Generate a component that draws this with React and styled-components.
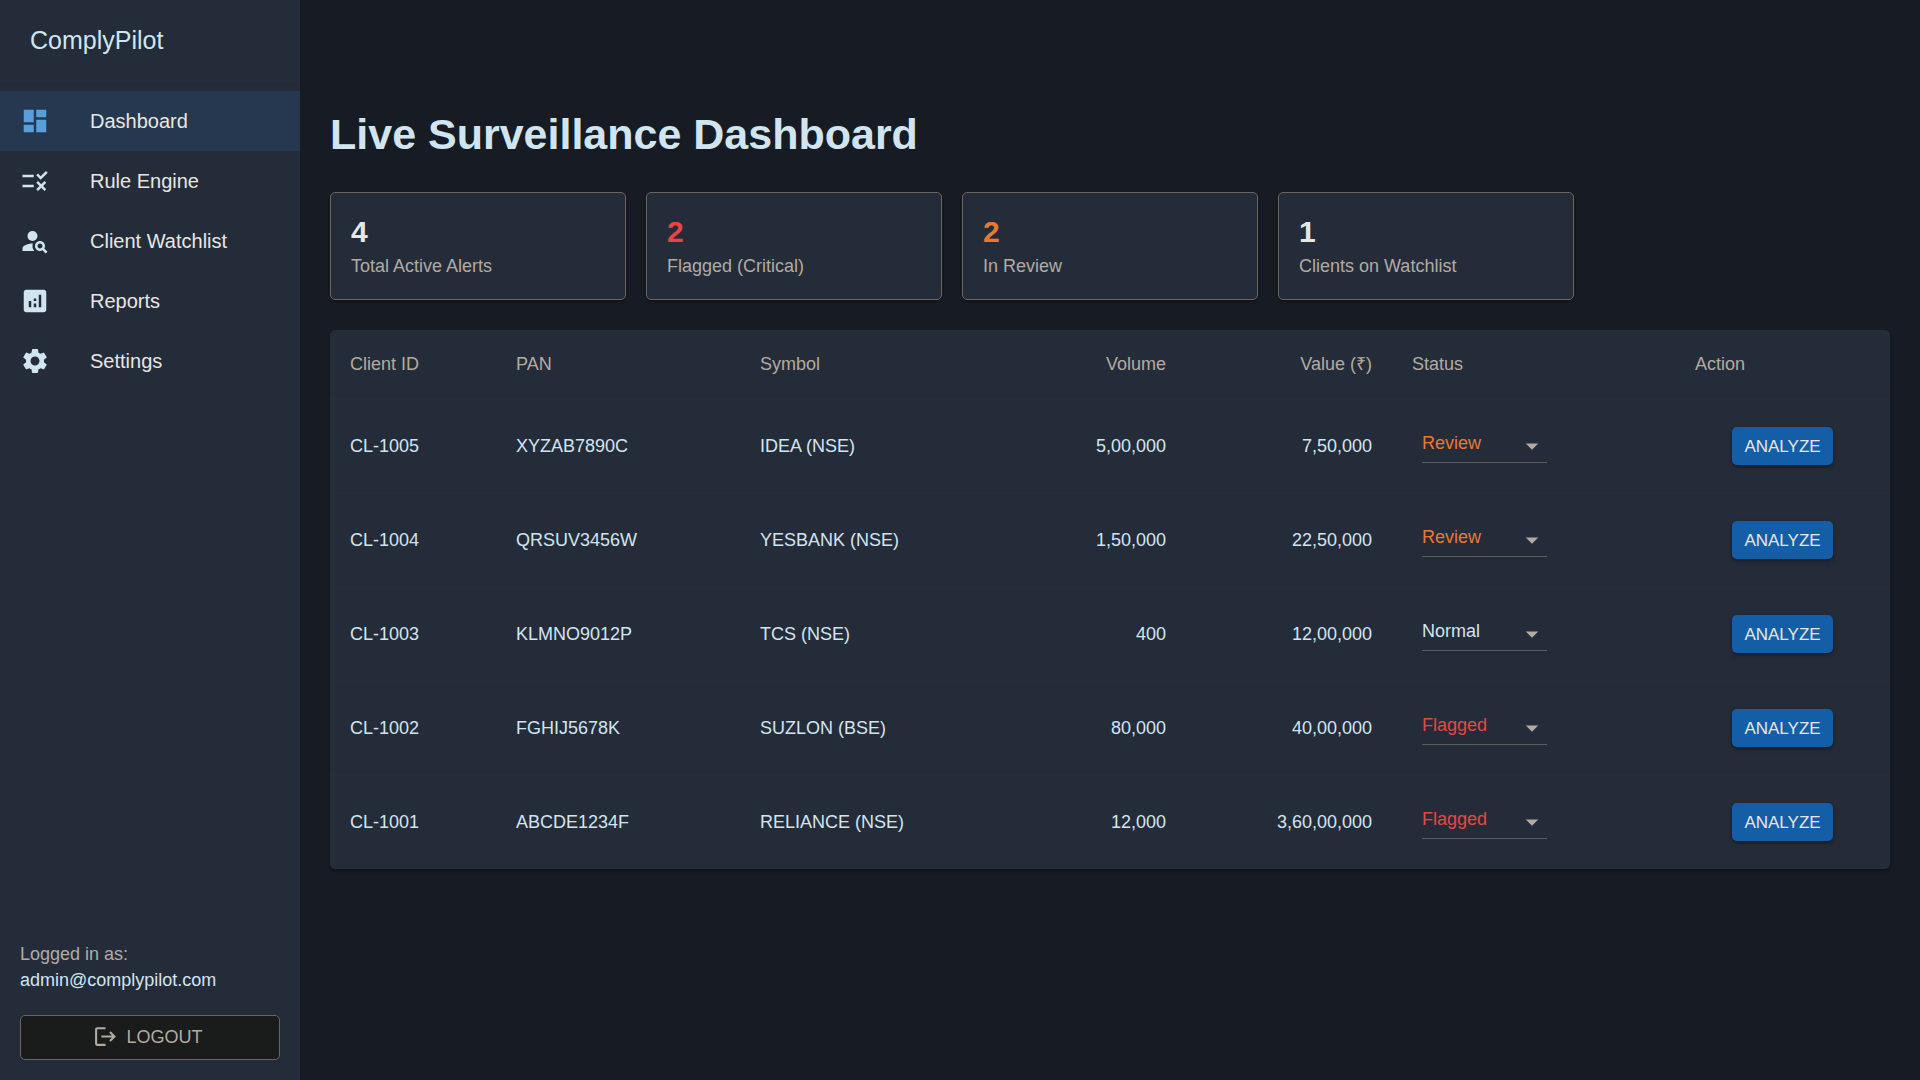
import React, { useState } from "react";
import styled, { createGlobalStyle } from "styled-components";
import {
  MdDashboard,
  MdRule,
  MdPersonSearch,
  MdAnalytics,
  MdSettings,
} from "react-icons/md";

const colors = {
  page: "#171b23",
  panel: "#252c39",
  selected: "#263850",
  line: "#272d39",
  border: "#6b655b",
  underline: "#5b5d5c",
  text: "#d1e5f1",
  bright: "#e8e6e3",
  muted: "#b2aba1",
  accent: "#589fdb",
  red: "#e64646",
  orange: "#e67a35",
  blue: "#145ea8",
  dark: "#1a1b1b",
};

const GlobalStyle = createGlobalStyle`
  *, *::before, *::after { box-sizing: border-box; }
  body {
    margin: 0;
    background: ${colors.page};
    color: ${colors.text};
    font-family: "Liberation Sans", Arial, sans-serif;
    font-size: 18px;
    line-height: 26px;
  }
`;

const Layout = styled.div`
  display: flex;
  min-height: 100vh;
`;

const Sidebar = styled.aside`
  display: flex;
  flex-direction: column;
  flex: none;
  width: 300px;
  background: ${colors.panel};
`;

const Brand = styled.div`
  display: flex;
  align-items: center;
  height: 81px;
  padding: 0 30px;
  border-bottom: 1px solid ${colors.line};
  font-size: 25px;
`;

const Nav = styled.nav`
  flex: 1;
  padding: 10px 0;
`;

const NavLink = styled.a`
  display: flex;
  align-items: center;
  gap: 40px;
  height: 60px;
  padding: 0 20px;
  background: ${(p) => (p.$active ? colors.selected : "transparent")};
  color: ${colors.bright};
  font-size: 20px;
  text-decoration: none;

  svg {
    width: 30px;
    height: 30px;
    color: ${(p) => (p.$active ? colors.accent : colors.text)};
  }
`;

const Account = styled.div`
  padding: 20px;
`;

const Muted = styled.div`
  color: ${colors.muted};
`;

const LogoutButton = styled.button`
  display: flex;
  align-items: center;
  justify-content: center;
  gap: 8px;
  width: 100%;
  height: 45px;
  margin-top: 22px;
  padding: 0 4px 2px 0;
  border: 1px solid ${colors.border};
  border-radius: 5px;
  background: ${colors.dark};
  color: ${colors.muted};
  font: inherit;
  cursor: pointer;

  svg {
    width: 25px;
    height: 25px;
  }
`;

const Main = styled.main`
  flex: 1;
  min-width: 0;
  padding: 108px 30px 30px;
`;

const Title = styled.h1`
  margin: 0 0 32px;
  font-size: 43px;
  line-height: 52px;
`;

const Stats = styled.section`
  display: grid;
  grid-template-columns: repeat(5, 1fr);
  gap: 20px;
  margin-bottom: 30px;
`;

const Card = styled.div`
  padding: 20px;
  border: 1px solid ${colors.border};
  border-radius: 5px;
  background: ${colors.panel};
  box-shadow: 0 2px 3px rgba(0, 0, 0, 0.3);
`;

const Figure = styled.div`
  padding-bottom: 2px;
  color: ${(p) => p.$color};
  font-size: 30px;
  font-weight: 700;
  line-height: 38px;
`;

const Panel = styled.section`
  overflow: hidden;
  border-radius: 5px;
  background: ${colors.panel};
  box-shadow: 0 2px 3px rgba(0, 0, 0, 0.3);
`;

const Table = styled.table`
  width: 100%;
  table-layout: fixed;
  border-collapse: collapse;
`;

const Col = styled.col`
  width: ${(p) => p.$w}px;
`;

const Head = styled.th`
  height: 69px;
  padding: 0 20px;
  border-bottom: 1px solid ${colors.line};
  color: ${colors.muted};
  font-weight: 400;
  text-align: ${(p) => p.$align || "left"};
`;

const Cell = styled.td`
  height: 94px;
  padding: 0 20px;
  border-bottom: 1px solid ${colors.line};
  text-align: ${(p) => p.$align || "left"};

  tr:last-child > & {
    border-bottom: 0;
  }
`;

const SelectBox = styled.div`
  position: relative;
  width: 125px;
  margin: 0 10px;

  svg {
    position: absolute;
    top: 2px;
    right: 0;
    width: 30px;
    height: 30px;
    color: ${colors.muted};
    pointer-events: none;
  }
`;

const Select = styled.select`
  display: block;
  width: 100%;
  height: 34px;
  padding: 0 30px 5px 0;
  border: 0;
  border-bottom: 1px solid ${colors.underline};
  border-radius: 0;
  outline: 0;
  appearance: none;
  background: transparent;
  color: ${(p) => p.$color};
  font: inherit;
  cursor: pointer;
`;

const AnalyzeButton = styled.button`
  height: 38px;
  padding: 2px 12px 0;
  border: 0;
  border-radius: 5px;
  background: ${colors.blue};
  box-shadow: 0 2px 4px rgba(0, 0, 0, 0.4);
  color: ${colors.bright};
  font: inherit;
  font-size: 17px;
  vertical-align: middle;
  cursor: pointer;
`;

const LogoutIcon = () => (
  <svg viewBox="0 0 24 24" fill="currentColor" aria-hidden="true">
    <path d="M17 7l-1.41 1.41L18.17 11H8v2h10.17l-2.58 2.58L17 17l5-5zM4 5h8V3H4c-1.1 0-2 .9-2 2v14c0 1.1.9 2 2 2h8v-2H4z" />
  </svg>
);

const ArrowIcon = () => (
  <svg viewBox="0 0 24 24" fill="currentColor" aria-hidden="true">
    <path d="M7 10l5 5 5-5z" />
  </svg>
);

const navItems = [
  ["Dashboard", MdDashboard],
  ["Rule Engine", MdRule],
  ["Client Watchlist", MdPersonSearch],
  ["Reports", MdAnalytics],
  ["Settings", MdSettings],
];

const stats = [
  ["4", "Total Active Alerts", colors.bright],
  ["2", "Flagged (Critical)", colors.red],
  ["2", "In Review", colors.orange],
  ["1", "Clients on Watchlist", colors.bright],
];

const columns = [
  ["Client ID", 166],
  ["PAN", 244],
  ["Symbol", 280],
  ["Volume", 166, "right"],
  ["Value (₹)", 206, "right"],
  ["Status", 283],
  ["Action", 215],
];

const initialAlerts = [
  ["CL-1005", "XYZAB7890C", "IDEA (NSE)", "5,00,000", "7,50,000", "Review"],
  ["CL-1004", "QRSUV3456W", "YESBANK (NSE)", "1,50,000", "22,50,000", "Review"],
  ["CL-1003", "KLMNO9012P", "TCS (NSE)", "400", "12,00,000", "Normal"],
  ["CL-1002", "FGHIJ5678K", "SUZLON (BSE)", "80,000", "40,00,000", "Flagged"],
  ["CL-1001", "ABCDE1234F", "RELIANCE (NSE)", "12,000", "3,60,00,000", "Flagged"],
];

const statusColors = {
  Normal: colors.text,
  Review: colors.orange,
  Flagged: colors.red,
};

function StatusSelect({ client, initial }) {
  const [status, setStatus] = useState(initial);
  return (
    <SelectBox>
      <Select
        aria-label={`Status of ${client}`}
        value={status}
        $color={statusColors[status]}
        onChange={(e) => setStatus(e.target.value)}
      >
        {Object.keys(statusColors).map((name) => (
          <option key={name}>{name}</option>
        ))}
      </Select>
      <ArrowIcon />
    </SelectBox>
  );
}

export default function App() {
  return (
    <>
      <GlobalStyle />
      <Layout>
        <Sidebar>
          <Brand>ComplyPilot</Brand>
          <Nav>
            {navItems.map(([label, Icon], i) => (
              <NavLink key={label} href="#" $active={i === 0}>
                <Icon aria-hidden="true" />
                {label}
              </NavLink>
            ))}
          </Nav>
          <Account>
            <Muted>Logged in as:</Muted>
            <div>admin@complypilot.com</div>
            <LogoutButton type="button">
              <LogoutIcon />
              LOGOUT
            </LogoutButton>
          </Account>
        </Sidebar>
        <Main>
          <Title>Live Surveillance Dashboard</Title>
          <Stats>
            {stats.map(([value, label, color]) => (
              <Card key={label}>
                <Figure $color={color}>{value}</Figure>
                <Muted>{label}</Muted>
              </Card>
            ))}
          </Stats>
          <Panel>
            <Table>
              <colgroup>
                {columns.map(([label, w]) => (
                  <Col key={label} $w={w} />
                ))}
              </colgroup>
              <thead>
                <tr>
                  {columns.map(([label, , align]) => (
                    <Head key={label} scope="col" $align={align}>
                      {label}
                    </Head>
                  ))}
                </tr>
              </thead>
              <tbody>
                {initialAlerts.map(([id, pan, symbol, volume, value, status]) => (
                  <tr key={id}>
                    <Cell>{id}</Cell>
                    <Cell>{pan}</Cell>
                    <Cell>{symbol}</Cell>
                    <Cell $align="right">{volume}</Cell>
                    <Cell $align="right">{value}</Cell>
                    <Cell>
                      <StatusSelect client={id} initial={status} />
                    </Cell>
                    <Cell $align="center">
                      <AnalyzeButton type="button">ANALYZE</AnalyzeButton>
                    </Cell>
                  </tr>
                ))}
              </tbody>
            </Table>
          </Panel>
        </Main>
      </Layout>
    </>
  );
}
